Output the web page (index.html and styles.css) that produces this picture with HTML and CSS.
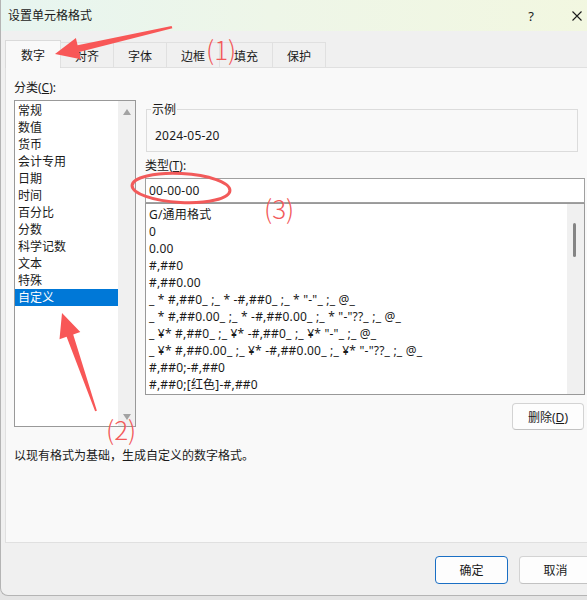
FILE: index.html
```html
<!DOCTYPE html>
<html lang="zh-CN">
<head>
<meta charset="utf-8">
<title>设置单元格格式</title>
<link rel="stylesheet" href="styles.css">
</head>
<body>
<div class="dialog">
  <div class="titlebar">
    <span class="title">设置单元格格式</span>
    <span class="help">?</span>
    <span class="close"><svg width="10" height="10" viewBox="0 0 10 10"><path d="M0.5 0.5 L9.5 9.5 M9.5 0.5 L0.5 9.5" stroke="#1a1a1a" stroke-width="1.1" fill="none"/></svg></span>
  </div>
  <div class="tabs">
    <div class="tab active">数字</div>
    <div class="tab">对齐</div>
    <div class="tab">字体</div>
    <div class="tab">边框</div>
    <div class="tab">填充</div>
    <div class="tab">保护</div>
  </div>
  <div class="panel">
    <div class="left">
      <div class="label">分类(<u>C</u>):</div>
      <div class="listbox cat">
        <ul class="items">
          <li>常规</li>
          <li>数值</li>
          <li>货币</li>
          <li>会计专用</li>
          <li>日期</li>
          <li>时间</li>
          <li>百分比</li>
          <li>分数</li>
          <li>科学记数</li>
          <li>文本</li>
          <li>特殊</li>
          <li class="sel">自定义</li>
        </ul>
        <div class="vscroll arrows"><span class="up"></span><span class="down"></span></div>
      </div>
    </div>
    <div class="right">
      <fieldset class="sample">
        <legend>示例</legend>
        <div class="sample-val">2024-05-20</div>
      </fieldset>
      <div class="label type-label">类型(<u>T</u>):</div>
      <div class="input">00-00-00</div>
      <div class="listbox fmt">
        <ul class="items">
          <li>G/通用格式</li>
          <li>0</li>
          <li>0.00</li>
          <li>#,##0</li>
          <li>#,##0.00</li>
          <li>_ * #,##0_ ;_ * -#,##0_ ;_ * "-"_ ;_ @_</li>
          <li>_ * #,##0.00_ ;_ * -#,##0.00_ ;_ * "-"??_ ;_ @_</li>
          <li>_ ¥* #,##0_ ;_ ¥* -#,##0_ ;_ ¥* "-"_ ;_ @_</li>
          <li>_ ¥* #,##0.00_ ;_ ¥* -#,##0.00_ ;_ ¥* "-"??_ ;_ @_</li>
          <li>#,##0;-#,##0</li>
          <li>#,##0;[红色]-#,##0</li>
        </ul>
        <div class="vscroll"><span class="thumb"></span></div>
      </div>
      <div class="btn-row"><button class="btn del">删除(<u>D</u>)</button></div>
    </div>
    <p class="desc">以现有格式为基础，生成自定义的数字格式。</p>
  </div>
  <div class="footer">
    <button class="btn primary">确定</button>
    <button class="btn">取消</button>
  </div>
</div>

<svg class="annot" width="587" height="600" viewBox="0 0 587 600">
  <polygon fill="#f85757" points="55,54 80.9,59.3 79.2,52.0 172.4,28.3 171.6,25.9 77.6,45.2 75.9,37.9"/>
  <polygon fill="#f85757" points="62,313 80.3,332.1 73.2,334.6 96.9,410.7 95.1,411.3 66.6,336.8 59.5,339.3"/>
  <ellipse cx="181" cy="188" rx="49" ry="14.5" fill="none" stroke="#f25a5a" stroke-width="3" transform="rotate(3 181 188)"/>
</svg>
<span class="note n1">(1)</span>
<span class="note n2">(2)</span>
<span class="note n3">(3)</span>
</body>
</html>
```
FILE: styles.css
```css
html, body {
  margin: 0;
  padding: 0;
  overflow: hidden;
  width: 587px;
  height: 600px;
}
body {
  background: #e4e4e4;
  font-family: "Noto Sans", "Noto Sans CJK SC", sans-serif;
  font-size: 12px;
  color: #1a1a1a;
  position: relative;
}
.dialog {
  box-sizing: border-box;
  width: 600px;
  height: 596px;
  background: #f0f0f0;
  border-left: 1px solid #b4b4b4;
  border-bottom: 1px solid #b4b4b4;
  border-radius: 0 0 8px 8px;
  overflow: hidden;
}
.titlebar {
  height: 31px;
  display: flex;
  align-items: center;
  background: linear-gradient(90deg, #e7f5f0 0%, #eef6e8 45%, #f2f7e0 100%);
}
.title {
  padding-left: 7px;
  line-height: 17px;
}
.help {
  margin-left: auto;
  width: 46px;
  text-align: center;
  font-size: 13px;
}
.close {
  width: 46px;
  display: flex;
  justify-content: center;
}
.tabs {
  display: flex;
  align-items: flex-end;
  height: 27px;
  margin-top: 9px;
  padding-left: 4px;
  position: relative;
  z-index: 1;
}
.tab {
  box-sizing: border-box;
  height: 25px;
  width: 54px;
  border: 1px solid #e0e0e0;
  border-bottom: none;
  margin-left: -1px;
  background: #f0f0f0;
  display: flex;
  align-items: center;
  justify-content: center;
  padding-top: 1px;
}
.tab.active {
  height: 28px;
  width: 56px;
  margin-left: 0;
  margin-bottom: -1px;
  background: #f9f9f9;
  border-color: #dadada;
}
.panel {
  box-sizing: border-box;
  width: 590px;
  height: 476px;
  margin-left: 4px;
  background: #f9f9f9;
  border: 1px solid #e0e0e0;
  padding: 11px 0 0 8px;
  display: grid;
  grid-template-columns: 122px 440px;
  column-gap: 9px;
  align-content: start;
}
.label {
  line-height: 17px;
  height: 17px;
}
.listbox {
  box-sizing: border-box;
  display: flex;
  background: #fff;
  border: 1px solid #999;
}
.listbox.cat {
  margin-top: 4px;
  height: 327px;
}
.items {
  list-style: none;
  margin: 0;
  padding: 1px 0 0 0;
  flex: 1;
  min-width: 0;
}
.items li {
  height: 17px;
  line-height: 17px;
  padding-left: 3px;
  white-space: nowrap;
}
.items li.sel {
  background: #0078d7;
  color: #fff;
}
.vscroll {
  width: 17px;
  background: #f0f0f0;
  display: flex;
  flex-direction: column;
  align-items: center;
}
.arrows {
  justify-content: space-between;
  padding: 8px 0 6px;
  box-sizing: border-box;
}
.up {
  width: 0;
  height: 0;
  border-left: 4px solid transparent;
  border-right: 4px solid transparent;
  border-bottom: 6px solid #a3a3a3;
}
.down {
  width: 0;
  height: 0;
  border-left: 4px solid transparent;
  border-right: 4px solid transparent;
  border-top: 6px solid #a3a3a3;
}
.right {
  display: flex;
  flex-direction: column;
}
.sample {
  box-sizing: border-box;
  width: 432px;
  margin: 22px 0 0 1px;
  padding: 9px 0 7px 8px;
  border: 1px solid #dcdcdc;
  min-width: 0;
}
.sample legend {
  padding: 0 1px;
  margin-left: -4px;
  line-height: 17px;
}
.sample-val {
  line-height: 17px;
  letter-spacing: 0.2px;
}
.type-label {
  margin-top: 5px;
}
.input {
  box-sizing: border-box;
  margin-top: 4px;
  height: 25px;
  line-height: 23px;
  padding-left: 3px;
  background: #fff;
  border: 1px solid #a0a0a0;
  letter-spacing: 0.2px;
}
.listbox.fmt {
  height: 192px;
}
.listbox.fmt .items {
  padding-top: 2px;
}
.listbox.fmt .items li {
  letter-spacing: 0.2px;
}
.listbox.fmt .vscroll {
  padding-top: 19px;
  box-sizing: border-box;
  align-items: flex-start;
  padding-left: 6px;
}
.thumb {
  width: 3px;
  height: 34px;
  border-radius: 2px;
  background: #858585;
}
.btn-row {
  display: flex;
  justify-content: flex-end;
  margin-top: 8px;
  padding-right: 1px;
}
.btn {
  box-sizing: border-box;
  width: 73px;
  height: 28px;
  padding: 0;
  font: inherit;
  color: #1a1a1a;
  background: #fdfdfd;
  border: 1px solid #d3d3d3;
  border-bottom-color: #c2c2c2;
  border-radius: 4px;
}
.btn.del {
  width: 72px;
  height: 27px;
}
.btn.primary {
  border: 1px solid #1a6fc4;
}
.desc {
  grid-column: 1 / -1;
  margin: 17px 0 0;
  line-height: 17px;
}
.footer {
  display: flex;
  justify-content: flex-end;
  gap: 11px;
  margin-top: 13px;
  padding-right: 8px;
}
.annot {
  position: absolute;
  left: 0;
  top: 0;
  z-index: 10;
  pointer-events: none;
}
.note {
  position: absolute;
  z-index: 11;
  color: #f25a5a;
  font-family: "Noto Sans CJK SC", "Noto Sans", sans-serif;
  font-weight: 300;
  font-size: 26px;
  line-height: 26px;
  pointer-events: none;
}
.n1 { left: 206px; top: 36px; }
.n2 { left: 106px; top: 416px; }
.n3 { left: 264px; top: 195px; }
```
